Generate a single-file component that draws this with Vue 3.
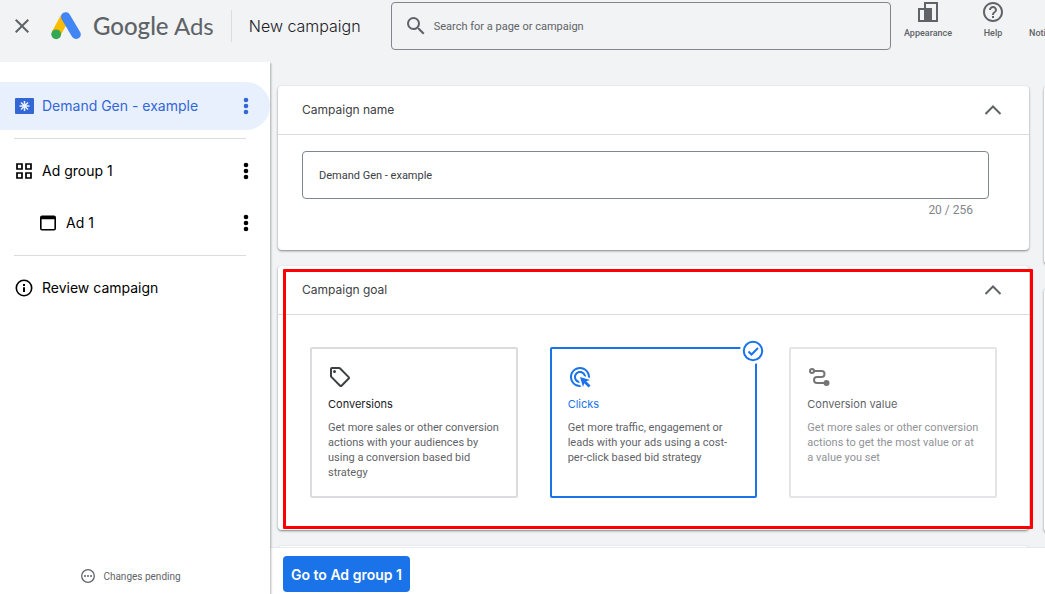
<script setup>
import { ref } from 'vue'

const campaignName = ref('Demand Gen - example')
const search = ref('')
const goal = ref('clicks')

const goals = [
  {
    id: 'conversions',
    title: 'Conversions',
    text: 'Get more sales or other conversion actions with your audiences by using a conversion based bid strategy',
  },
  {
    id: 'clicks',
    title: 'Clicks',
    text: 'Get more traffic, engagement or leads with your ads using a cost-per-click based bid strategy',
  },
  {
    id: 'value',
    title: 'Conversion value',
    text: 'Get more sales or other conversion actions to get the most value or at a value you set',
    disabled: true,
  },
]
</script>

<template>
  <div class="page">
    <header class="topbar">
      <button class="icon-btn close" aria-label="Close">
        <svg width="24" height="24" viewBox="0 0 24 24"><path d="M19 6.41 17.59 5 12 10.59 6.41 5 5 6.41 10.59 12 5 17.59 6.41 19 12 13.41 17.59 19 19 17.59 13.41 12z" /></svg>
      </button>
      <svg class="logo" width="30" height="28" viewBox="0 0 30 28">
        <path d="M14.3 4.9 5.2 21.6" stroke="#fbbc04" stroke-width="9.4" />
        <path d="M14.7 4.9 25.1 22.3" stroke="#4285f4" stroke-width="9.4" stroke-linecap="round" />
        <circle cx="5.2" cy="22.3" r="4.9" fill="#34a853" />
      </svg>
      <span class="brand"><span class="brand-main">Google</span> Ads</span>
      <h1 class="page-title">New campaign</h1>
      <label class="search">
        <svg width="24" height="24" viewBox="0 0 24 24"><path d="M15.5 14h-.79l-.28-.27A6.47 6.47 0 0 0 16 9.5 6.5 6.5 0 1 0 9.5 16c1.61 0 3.09-.59 4.23-1.57l.27.28v.79l5 4.99L20.49 19zm-6 0C7.01 14 5 11.99 5 9.5S7.01 5 9.5 5 14 7.01 14 9.5 11.99 14 9.5 14z" /></svg>
        <input v-model="search" type="text" aria-label="Search" placeholder="Search for a page or campaign" />
      </label>
      <nav class="tools">
        <button class="tool appearance">
          <svg width="24" height="24" viewBox="0 0 24 24"><path fill-rule="evenodd" d="M8 2h14v20H2V8h6zM10 4v4h6v12h4V4zM4 10v10h4V10z" /></svg>
          Appearance
        </button>
        <button class="tool help">
          <svg width="24" height="24" viewBox="0 0 24 24"><path d="M11 18h2v-2h-2v2zm1-16C6.48 2 2 6.48 2 12s4.48 10 10 10 10-4.48 10-10S17.52 2 12 2zm0 18c-4.41 0-8-3.59-8-8s3.59-8 8-8 8 3.59 8 8-3.59 8-8 8zm0-14c-2.21 0-4 1.79-4 4h2c0-1.1.9-2 2-2s2 .9 2 2c0 2-3 1.75-3 5h2c0-2.25 3-2.5 3-5 0-2.21-1.79-4-4-4z" /></svg>
          Help
        </button>
        <button class="tool notifications">Notifications</button>
      </nav>
    </header>

    <div class="body">
      <aside class="sidebar">
        <div class="item active">
          <svg class="lead" width="20" height="20" viewBox="0 0 20 20">
            <rect x="1" y="2" width="19" height="16" rx="1" />
            <path d="M10.5 5v10M5.5 10h10M7 6.5l7 7M14 6.5l-7 7" stroke="#e8f0fe" stroke-width="1.5" />
          </svg>
          <a href="#campaign">Demand Gen - example</a>
          <button class="icon-btn" aria-label="Campaign options">
            <svg width="24" height="24" viewBox="0 0 24 24"><circle cx="12" cy="6" r="2.3" /><circle cx="12" cy="12" r="2.3" /><circle cx="12" cy="18" r="2.3" /></svg>
          </button>
        </div>
        <hr />
        <div class="item">
          <svg class="lead" width="20" height="20" viewBox="0 0 20 20">
            <path d="M3 3h5v5H3zM12 3h5v5h-5zM3 12h5v5H3zM12 12h5v5h-5z" fill="none" stroke="currentColor" stroke-width="1.7" />
          </svg>
          <a href="#group">Ad group 1</a>
          <button class="icon-btn" aria-label="Ad group options">
            <svg width="24" height="24" viewBox="0 0 24 24"><circle cx="12" cy="6" r="2.3" /><circle cx="12" cy="12" r="2.3" /><circle cx="12" cy="18" r="2.3" /></svg>
          </button>
        </div>
        <div class="item nested">
          <svg class="lead" width="20" height="20" viewBox="0 0 20 20">
            <path fill-rule="evenodd" d="M4 2.5h12a2 2 0 0 1 2 2v11a2 2 0 0 1-2 2H4a2 2 0 0 1-2-2v-11a2 2 0 0 1 2-2zM3.6 6.2V16h12.8V6.2z" />
          </svg>
          <a href="#ad">Ad 1</a>
          <button class="icon-btn" aria-label="Ad options">
            <svg width="24" height="24" viewBox="0 0 24 24"><circle cx="12" cy="6" r="2.3" /><circle cx="12" cy="12" r="2.3" /><circle cx="12" cy="18" r="2.3" /></svg>
          </button>
        </div>
        <hr />
        <div class="item">
          <svg class="lead" width="20" height="20" viewBox="0 0 20 20">
            <circle cx="10" cy="10" r="7.7" fill="none" stroke="currentColor" stroke-width="1.6" />
            <path d="M9 6h2v2H9zM9 9.2h2V14H9z" />
          </svg>
          <a href="#review">Review campaign</a>
        </div>
        <p class="status">
          <svg width="16" height="16" viewBox="0 0 16 16">
            <circle cx="8" cy="8" r="6.3" fill="none" stroke="currentColor" stroke-width="1.3" />
            <path d="M4 7.2h2v1.6H4zM7 7.2h2v1.6H7zM10 7.2h2v1.6h-2z" />
          </svg>
          Changes pending
        </p>
      </aside>

      <main class="main">
        <div class="scroll">
          <div class="cards">
            <section class="card">
              <header class="card-head">
                <h2>Campaign name</h2>
                <button class="icon-btn" aria-label="Collapse campaign name">
                  <svg width="24" height="24" viewBox="0 0 24 24"><path d="m4.5 16 7.5-7.5 7.5 7.5" fill="none" stroke="currentColor" stroke-width="2" /></svg>
                </button>
              </header>
              <div class="name-body">
                <input v-model="campaignName" class="name-input" type="text" maxlength="256" aria-label="Campaign name" />
                <p class="count">{{ campaignName.length }} / 256</p>
              </div>
            </section>

            <section class="card">
              <header class="card-head">
                <h2>Campaign goal</h2>
                <button class="icon-btn" aria-label="Collapse campaign goal">
                  <svg width="24" height="24" viewBox="0 0 24 24"><path d="m4.5 16 7.5-7.5 7.5 7.5" fill="none" stroke="currentColor" stroke-width="2" /></svg>
                </button>
              </header>
              <div class="goals">
                <label v-for="g in goals" :key="g.id" class="goal" :class="{ selected: goal === g.id, disabled: g.disabled }">
                  <input v-model="goal" type="radio" name="goal" :value="g.id" :disabled="g.disabled" />
                  <svg v-if="g.id === 'conversions'" width="24" height="24" viewBox="0 0 24 24">
                    <path d="M21.41 11.41l-8.83-8.83A2 2 0 0 0 11.17 2H4a2 2 0 0 0-2 2v7.17c0 .53.21 1.04.59 1.41l8.83 8.83c.78.78 2.05.78 2.83 0l7.17-7.17c.78-.78.78-2.04-.01-2.83zM12.83 20 4 11.17V4h7.17L20 12.83z" />
                    <circle cx="6.5" cy="6.5" r="1.5" />
                  </svg>
                  <svg v-else-if="g.id === 'clicks'" width="24" height="24" viewBox="0 0 24 24">
                    <path d="M11.71 17.99C8.53 17.84 6 15.22 6 12c0-3.31 2.69-6 6-6 3.22 0 5.84 2.53 5.99 5.71l-2.1-.63C15.48 9.31 13.89 8 12 8c-2.21 0-4 1.79-4 4 0 1.89 1.31 3.48 3.08 3.89zM22 12c0 .3-.01.6-.04.9l-1.97-.59c.01-.1.01-.21.01-.31 0-4.42-3.58-8-8-8s-8 3.58-8 8 3.58 8 8 8c.1 0 .21 0 .31-.01l.59 1.97c-.3.03-.6.04-.9.04-5.52 0-10-4.48-10-10S6.48 2 12 2s10 4.48 10 10zm-3.77 4.26L22 15l-10-3 3 10 1.26-3.77 4.27 4.27 1.98-1.98z" />
                  </svg>
                  <svg v-else width="24" height="24" viewBox="0 0 24 24" fill="none" stroke="currentColor" stroke-width="2">
                    <circle cx="5" cy="6" r="2" />
                    <path d="M7 6h7.5a3 3 0 0 1 0 6H10a3 3 0 0 0 0 6h9" />
                    <circle cx="19.5" cy="18" r="3" fill="currentColor" stroke="none" />
                  </svg>
                  <span class="goal-title">{{ g.title }}</span>
                  <span class="goal-text">{{ g.text }}</span>
                  <svg v-if="goal === g.id" class="badge" width="26" height="26" viewBox="0 0 26 26" fill="none" stroke="currentColor" stroke-width="2">
                    <circle cx="13" cy="13" r="13" fill="#fff" stroke="none" />
                    <circle cx="13" cy="13" r="9.2" />
                    <path d="m8.5 13.5 3 3 6.5-6.5" />
                  </svg>
                </label>
              </div>
              <div class="highlight"></div>
            </section>

            <section class="card next"></section>
          </div>
          <div class="side-cards">
            <section class="card"></section>
            <section class="card"></section>
          </div>
        </div>
        <footer class="actions">
          <button class="primary">Go to Ad group 1</button>
        </footer>
      </main>
    </div>
  </div>
</template>

<style>
body {
  overflow: hidden;
}
</style>

<style scoped>
* {
  box-sizing: border-box;
}
.page {
  display: flex;
  flex-direction: column;
  height: 100vh;
  overflow: hidden;
  background: #f1f3f4;
  color: #202124;
  font-family: Roboto, sans-serif;
  font-size: 11px;
}
svg {
  display: block;
  flex: none;
  fill: currentColor;
}
svg[fill='none'],
.logo {
  fill: none;
}
button {
  border: 0;
  background: none;
  color: inherit;
  font: inherit;
  padding: 0;
  cursor: pointer;
}
h1,
h2,
p {
  margin: 0;
  font-weight: 400;
}

.topbar {
  display: flex;
  flex: none;
  height: 62px;
  padding: 2px 0 12px 10px;
  overflow: hidden;
  color: #5f6368;
  align-items: center;
}
.logo {
  margin-left: 17px;
}
.brand {
  margin-left: 12px;
  font-family: Lato, sans-serif;
  font-size: 24px;
  line-height: 32px;
  white-space: nowrap;
}
.brand-main {
  font-weight: 500;
}
.page-title {
  flex: none;
  width: 160px;
  margin-left: 17px;
  padding-left: 17px;
  border-left: 1px solid #dadce0;
  color: #202124;
  font-family: Inter, sans-serif;
  font-size: 16px;
  font-weight: 300;
  line-height: 32px;
  white-space: nowrap;
}
.search {
  display: flex;
  flex: 1;
  align-items: center;
  gap: 6px;
  height: 48px;
  padding: 0 12px;
  border: 1px solid #80868b;
  border-radius: 4px;
}
.search input {
  flex: 1;
  min-width: 0;
  padding: 0;
  border: 0;
  outline: 0;
  background: none;
  color: #5f6368;
  font: inherit;
}
.search input::placeholder {
  color: #5f6368;
  opacity: 1;
}
.tools {
  display: flex;
  flex: none;
  align-self: flex-start;
  width: 154px;
  overflow: hidden;
  font-size: 9px;
  font-weight: 500;
}
.tool {
  display: flex;
  flex: none;
  flex-direction: column;
  align-items: center;
  justify-content: flex-end;
  gap: 2px;
  width: 74px;
  height: 38px;
  line-height: 14px;
}
.tool.help {
  width: 56px;
}
.tool.notifications {
  align-items: flex-start;
  padding-left: 8px;
}

.body {
  display: flex;
  flex: 1;
  min-height: 0;
}
.sidebar {
  display: flex;
  flex: none;
  flex-direction: column;
  width: 270px;
  padding-top: 20px;
  background: #fff;
  box-shadow: 1px 1px 2px rgba(60, 64, 67, 0.4);
  clip-path: inset(0 -4px 0 0);
  z-index: 1;
}
.item {
  display: flex;
  align-items: center;
  gap: 8px;
  height: 48px;
  padding: 0 12px 0 14px;
  color: #000;
  font-family: Inter, sans-serif;
  font-size: 14px;
}
.item a {
  flex: 1;
  padding-bottom: 2px;
  color: inherit;
  text-decoration: none;
}
.item.active {
  border-radius: 0 24px 24px 0;
  background: #e8f0fe;
  color: #3367d6;
}
.item.nested {
  margin-top: 4px;
  padding-left: 38px;
}
hr {
  width: 232px;
  height: 1px;
  margin: 8px 0 8px 14px;
  border: 0;
  background: #dadce0;
}
.status {
  display: flex;
  align-items: center;
  justify-content: center;
  gap: 7px;
  margin-top: auto;
  padding: 0 9px 10px 0;
  color: #5f6368;
  font-size: 10px;
}

.main {
  display: flex;
  flex: 1;
  flex-direction: column;
  min-width: 0;
}
.scroll {
  display: flex;
  flex: 1;
  gap: 15px;
  min-height: 0;
  padding: 24px 0 0 8px;
  overflow: hidden;
}
.cards,
.side-cards {
  display: flex;
  flex: 1;
  flex-direction: column;
  gap: 16px;
  min-width: 0;
}
.side-cards {
  flex: 0 0 1px;
  gap: 24px;
}
.card {
  position: relative;
  flex: none;
  border-radius: 4px;
  background: #fff;
  box-shadow: 0 1px 2px rgba(60, 64, 67, 0.5), 0 1px 3px rgba(60, 64, 67, 0.15);
}
.side-cards .card {
  width: 300px;
  height: 178px;
}
.side-cards .card + .card {
  height: 244px;
}
.card.next {
  height: 80px;
}
.card-head {
  display: flex;
  align-items: center;
  justify-content: space-between;
  height: 49px;
  padding: 0 24px;
  border-bottom: 1px solid #dadce0;
}
.card-head h2 {
  padding-bottom: 2px;
  color: #3c4043;
  font-family: Inter, sans-serif;
  font-size: 12px;
}
.card-head .icon-btn {
  color: #5f6368;
}
.name-body {
  padding: 16px 40px 32px 24px;
}
.name-input {
  display: block;
  width: 100%;
  height: 48px;
  padding: 0 16px;
  border: 1px solid #80868b;
  border-radius: 4px;
  background: #fff;
  color: #3c4043;
  font: inherit;
}
.count {
  padding: 4px 16px 0 0;
  color: #80868b;
  font-size: 12px;
  line-height: 15px;
  text-align: right;
}
.goals {
  display: grid;
  grid-template-columns: repeat(3, 1fr);
  gap: 32px;
  padding: 32px;
}
.goal {
  position: relative;
  display: flex;
  flex-direction: column;
  min-height: 151px;
  padding: 16px;
  border: 2px solid #dadce0;
  border-radius: 2px;
  color: #3c4043;
  cursor: pointer;
}
.goal input {
  position: absolute;
  opacity: 0;
  margin: 0;
}
.goal-title {
  margin-top: 8px;
  color: #202124;
  font-family: Inter, sans-serif;
  font-size: 11px;
  line-height: 15px;
}
.goal-text {
  margin-top: 8px;
  color: #5f6368;
  line-height: 15px;
}
.goal.selected {
  border-color: #1a73e8;
  color: #1a73e8;
}
.goal.selected .goal-title {
  color: #1a73e8;
}
.goal.disabled {
  border-color: #e3e5e8;
  color: #757575;
}
.goal.disabled .goal-title {
  color: #5f6368;
}
.goal.disabled .goal-text {
  color: #919397;
}
.badge {
  position: absolute;
  top: -11px;
  right: -11px;
}
.highlight {
  position: absolute;
  inset: 3px -4px 1px 5px;
  border: 3px solid #f00;
  border-radius: 1px;
  pointer-events: none;
  z-index: 2;
}
.actions {
  flex: none;
  padding: 8px 13px 2px;
  border-top: 1px solid #e8eaed;
  background: #fff;
}
.actions .primary {
  display: block;
  height: 36px;
  padding: 0 8px;
  border-radius: 4px;
  background: #1a73e8;
  color: #fff;
  font-family: Inter, sans-serif;
  font-size: 14px;
  font-weight: 600;
}
</style>
